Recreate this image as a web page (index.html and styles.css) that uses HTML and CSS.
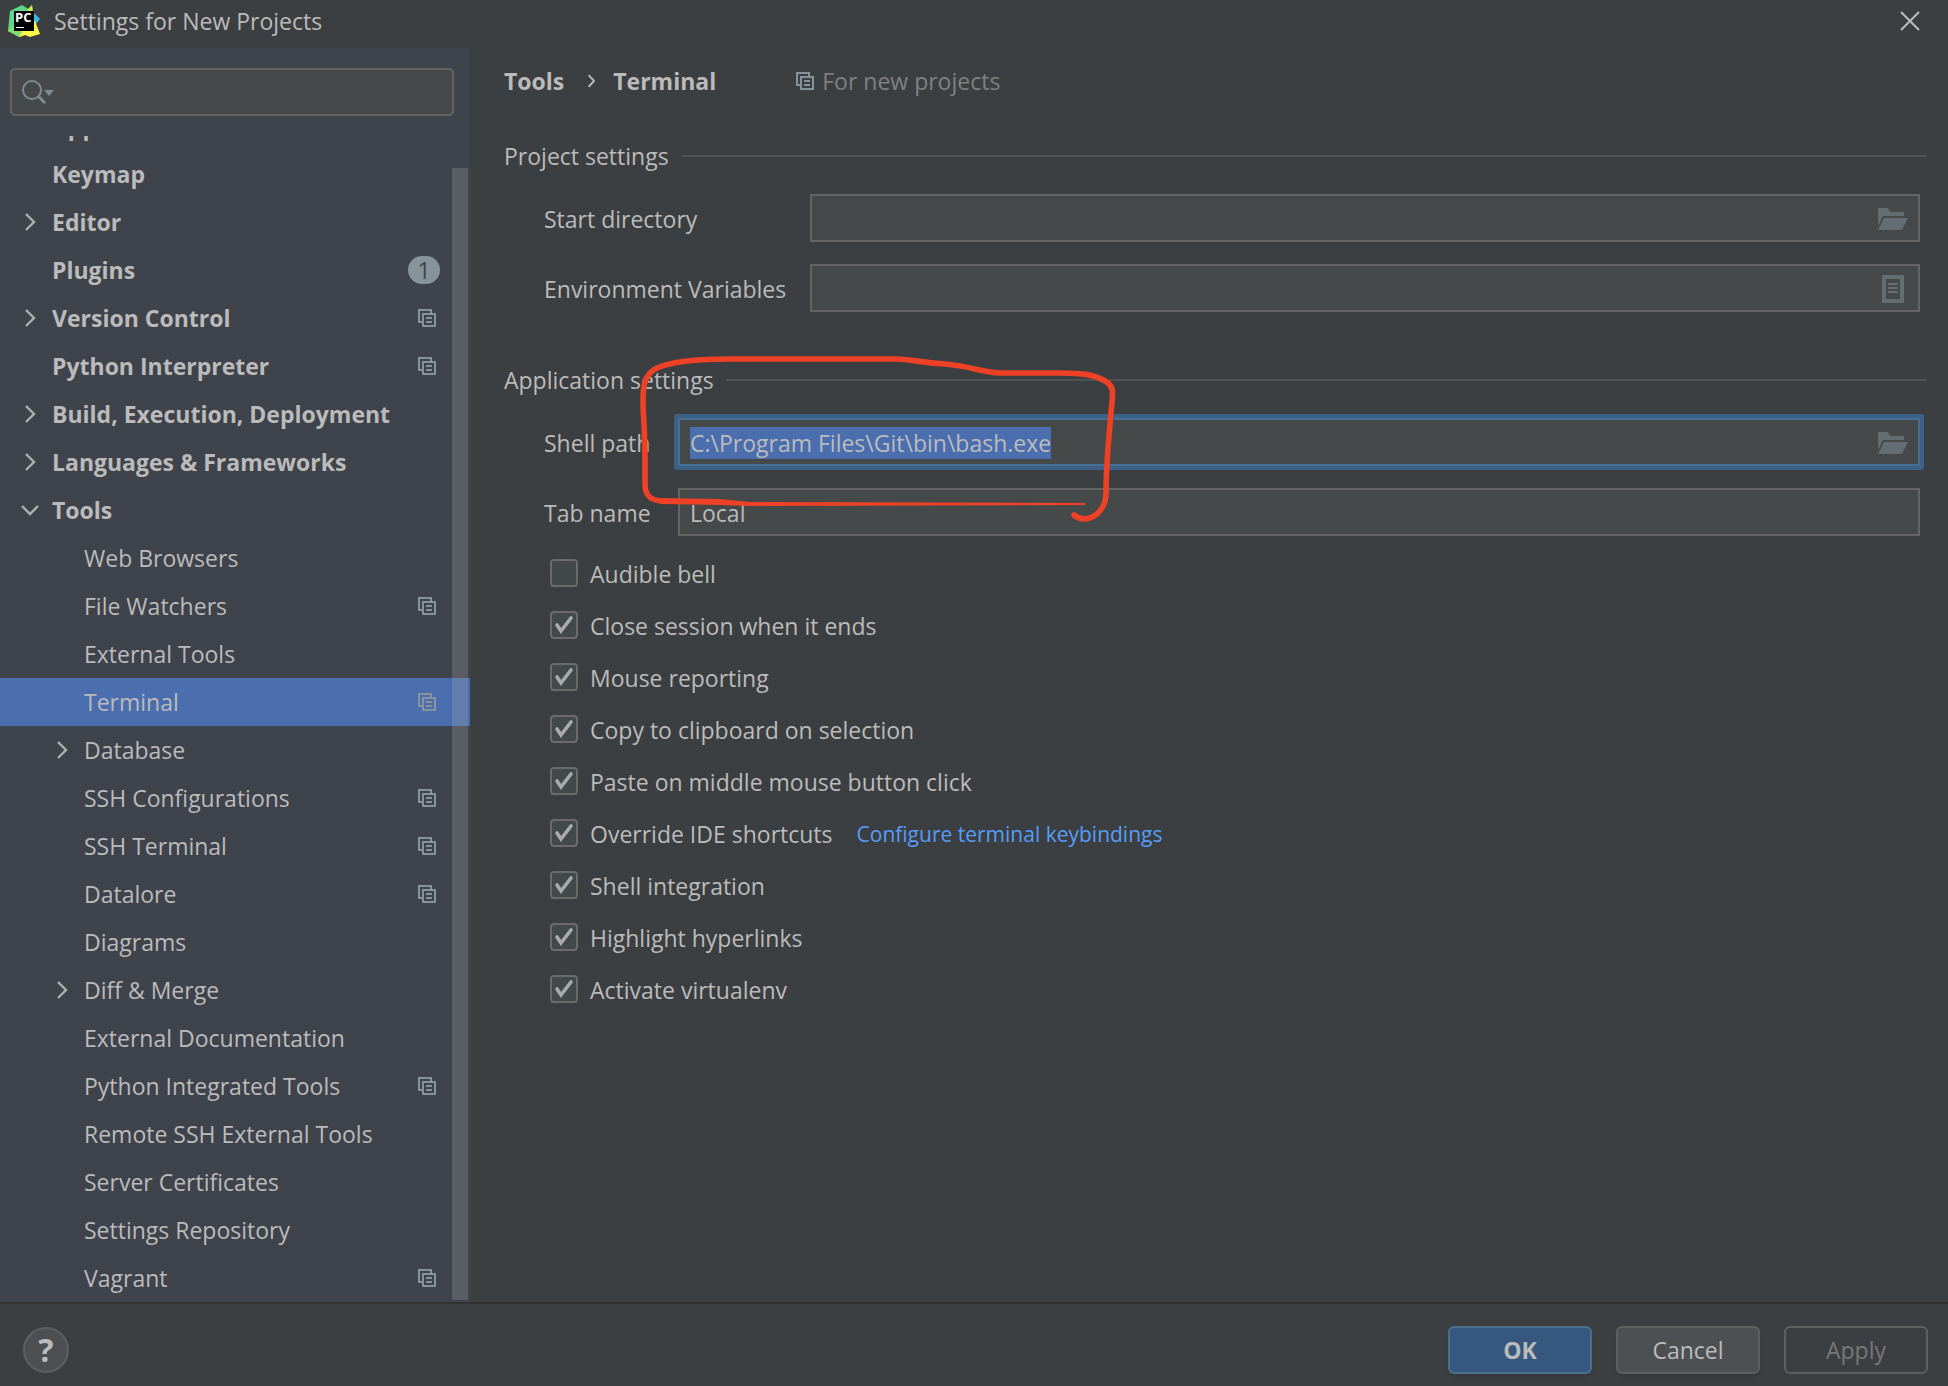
FILE: index.html
```html
<!DOCTYPE html>
<html lang="en">
<head>
    <meta charset="UTF-8">
    <meta name="viewport" content="width=device-width, initial-scale=1.0">
    <title>Settings for New Projects</title>
    <link rel="stylesheet" href="styles.css">
</head>
<body>
    <!-- Shared icons -->
    <svg class="sprite" aria-hidden="true">
        <symbol id="icon-copy" viewBox="0 0 18 18">
            <path d="M5 13H1V1h12v3M5 5h12v12H5zM8 9h6M8 13h6" fill="none" stroke="currentColor" stroke-width="2"/>
        </symbol>
        <symbol id="icon-arrow" viewBox="0 0 12 18">
            <path d="M2 1l8 8-8 8" fill="none" stroke="currentColor" stroke-width="2.4"/>
        </symbol>
        <symbol id="icon-arrow-down" viewBox="0 0 18 12">
            <path d="M1 2l8 8 8-8" fill="none" stroke="currentColor" stroke-width="2.4"/>
        </symbol>
        <symbol id="icon-folder" viewBox="0 0 30 22">
            <path d="M0 0h10l2 4h14v4H5L0 18z M6 10h24l-6 12H0z" fill="currentColor"/>
        </symbol>
        <symbol id="icon-list" viewBox="0 0 22 28">
            <path d="M2 2h18v24H2z" fill="none" stroke="currentColor" stroke-width="4"/>
            <path d="M6 9h10M6 13h10M6 17h10" stroke="currentColor" stroke-width="2"/>
        </symbol>
        <symbol id="icon-check" viewBox="0 0 28 28">
            <path d="M7 14l4 6L21 7" fill="none" stroke="currentColor" stroke-width="3.6" stroke-linecap="round"/>
        </symbol>
    </svg>

    <div class="dialog">
        <header class="titlebar">
            <svg class="logo" viewBox="0 0 32 32" aria-hidden="true">
                <path d="M2 6L14 0l8 5 2-5 1 8-15 20L0 26z" fill="#5fd68b"/>
                <path d="M19 5l5-5 1 8z" fill="#c6f04f"/>
                <path d="M26 8l6 6-4 5-4-2z" fill="#3fb8e8"/>
                <path d="M0 26l7-5 20-5 5 13-10 3-5-2-5 2z" fill="#fcf84a"/>
                <path d="M0 26l6-7 8 8-3 5z" fill="#7fdf6a"/>
                <path d="M6 6h20v20H6z" fill="#000"/>
                <path d="M8 22h8v1H8z" fill="#fff"/>
                <text x="7" y="17" class="logo-text">PC</text>
            </svg>
            <h1>Settings for New Projects</h1>
            <button class="close" type="button" aria-label="Close">
                <svg width="20" height="20" viewBox="0 0 20 20"><path d="M1 1l18 18M19 1L1 19" stroke="currentColor" stroke-width="2"/></svg>
            </button>
        </header>

        <div class="content">
            <aside class="sidebar">
                <label class="search">
                    <svg width="32" height="24" viewBox="0 0 32 24" aria-hidden="true">
                        <circle cx="10" cy="10" r="9" fill="none" stroke="currentColor" stroke-width="2"/>
                        <path d="M16 16l7 7" stroke="currentColor" stroke-width="3"/>
                        <path d="M22 10h10l-5 6z" fill="currentColor"/>
                    </svg>
                    <input type="text" aria-label="Search settings">
                </label>

                <nav class="tree">
                    <a class="row group" href="#">Appearance &amp; Behavior</a>
                    <a class="row group" href="#">Keymap</a>
                    <a class="row group" href="#"><svg class="arrow"><use href="#icon-arrow"/></svg>Editor</a>
                    <a class="row group" href="#">Plugins <span class="badge">1</span></a>
                    <a class="row group" href="#"><svg class="arrow"><use href="#icon-arrow"/></svg>Version Control <svg class="copy"><use href="#icon-copy"/></svg></a>
                    <a class="row group" href="#">Python Interpreter <svg class="copy"><use href="#icon-copy"/></svg></a>
                    <a class="row group" href="#"><svg class="arrow"><use href="#icon-arrow"/></svg>Build, Execution, Deployment</a>
                    <a class="row group" href="#"><svg class="arrow"><use href="#icon-arrow"/></svg>Languages &amp; Frameworks</a>
                    <a class="row group" href="#"><svg class="arrow"><use href="#icon-arrow-down"/></svg>Tools</a>
                    <a class="row" href="#">Web Browsers</a>
                    <a class="row" href="#">File Watchers <svg class="copy"><use href="#icon-copy"/></svg></a>
                    <a class="row" href="#">External Tools</a>
                    <a class="row selected" href="#">Terminal <svg class="copy"><use href="#icon-copy"/></svg></a>
                    <a class="row" href="#"><svg class="arrow"><use href="#icon-arrow"/></svg>Database</a>
                    <a class="row" href="#">SSH Configurations <svg class="copy"><use href="#icon-copy"/></svg></a>
                    <a class="row" href="#">SSH Terminal <svg class="copy"><use href="#icon-copy"/></svg></a>
                    <a class="row" href="#">Datalore <svg class="copy"><use href="#icon-copy"/></svg></a>
                    <a class="row" href="#">Diagrams</a>
                    <a class="row" href="#"><svg class="arrow"><use href="#icon-arrow"/></svg>Diff &amp; Merge</a>
                    <a class="row" href="#">External Documentation</a>
                    <a class="row" href="#">Python Integrated Tools <svg class="copy"><use href="#icon-copy"/></svg></a>
                    <a class="row" href="#">Remote SSH External Tools</a>
                    <a class="row" href="#">Server Certificates</a>
                    <a class="row" href="#">Settings Repository</a>
                    <a class="row" href="#">Vagrant <svg class="copy"><use href="#icon-copy"/></svg></a>
                    <div class="scrollbar"></div>
                </nav>
            </aside>

            <main class="main">
                <div class="breadcrumbs">
                    <strong>Tools</strong>
                    <svg class="crumb-arrow" viewBox="0 0 8 14"><path d="M1 1c1 3 5 5 5 6s-4 3-5 6" fill="none" stroke="currentColor" stroke-width="2"/></svg>
                    <strong>Terminal</strong>
                    <span class="scope"><svg class="copy"><use href="#icon-copy"/></svg>For new projects</span>
                </div>

                <section class="settings project">
                    <h2>Project settings</h2>
                    <div class="fields">
                        <label for="start-dir">Start directory</label>
                        <div class="field">
                            <input type="text" id="start-dir">
                            <button type="button" aria-label="Browse"><svg width="30" height="22"><use href="#icon-folder"/></svg></button>
                        </div>
                        <label for="env-vars">Environment Variables</label>
                        <div class="field">
                            <input type="text" id="env-vars">
                            <button type="button" aria-label="Edit variables"><svg width="22" height="28"><use href="#icon-list"/></svg></button>
                        </div>
                    </div>
                </section>

                <section class="settings application">
                    <h2>Application settings</h2>
                    <div class="fields">
                        <label for="shell-path">Shell path</label>
                        <div class="field active">
                            <input type="text" id="shell-path" value="C:\Program Files\Git\bin\bash.exe" spellcheck="false">
                            <button type="button" aria-label="Browse"><svg width="30" height="22"><use href="#icon-folder"/></svg></button>
                        </div>
                        <label for="tab-name">Tab name</label>
                        <div class="field">
                            <input type="text" id="tab-name" value="Local">
                        </div>
                    </div>

                    <div class="options">
                        <div class="option"><label><span class="check"><input type="checkbox"><svg><use href="#icon-check"/></svg></span>Audible bell</label></div>
                        <div class="option"><label><span class="check"><input type="checkbox" checked><svg><use href="#icon-check"/></svg></span>Close session when it ends</label></div>
                        <div class="option"><label><span class="check"><input type="checkbox" checked><svg><use href="#icon-check"/></svg></span>Mouse reporting</label></div>
                        <div class="option"><label><span class="check"><input type="checkbox" checked><svg><use href="#icon-check"/></svg></span>Copy to clipboard on selection</label></div>
                        <div class="option"><label><span class="check"><input type="checkbox" checked><svg><use href="#icon-check"/></svg></span>Paste on middle mouse button click</label></div>
                        <div class="option"><label><span class="check"><input type="checkbox" checked><svg><use href="#icon-check"/></svg></span>Override IDE shortcuts</label><a href="#">Configure terminal keybindings</a></div>
                        <div class="option"><label><span class="check"><input type="checkbox" checked><svg><use href="#icon-check"/></svg></span>Shell integration</label></div>
                        <div class="option"><label><span class="check"><input type="checkbox" checked><svg><use href="#icon-check"/></svg></span>Highlight hyperlinks</label></div>
                        <div class="option"><label><span class="check"><input type="checkbox" checked><svg><use href="#icon-check"/></svg></span>Activate virtualenv</label></div>
                    </div>
                </section>

                <!-- Hand-drawn mark round the shell path -->
                <svg class="marker" viewBox="640 350 480 180" aria-hidden="true">
                    <path d="M1074 515C1080 520 1088 520 1094 516C1102 511 1106 502 1106 493C1106 460 1109 440 1111 412C1113 392 1114 388 1108 383C1096 374 1080 373 1060 373L1000 373C980 372 970 366 945 364C915 362 910 359 896 359L730 359C695 359 670 362 657 368C645 374 643 384 643 400C643 415 645 430 645 460L645 484C645 496 651 501 664 501" fill="none" stroke="#ee4125" stroke-width="5.6" stroke-linecap="round" stroke-linejoin="round"/>
                    <path d="M660 498L720 499L750 502L1085 503V505L750 506L720 505L660 504z" fill="#ee4125"/>
                </svg>
            </main>
        </div>

        <footer class="footer">
            <button class="help" type="button" aria-label="Help">?</button>
            <button class="btn primary" type="button">OK</button>
            <button class="btn" type="button">Cancel</button>
            <button class="btn" type="button" disabled>Apply</button>
        </footer>
    </div>

    <script>
        // Start with the shell path selected
        const shellPath = document.getElementById('shell-path');
        shellPath.focus();
        shellPath.select();
    </script>
</body>
</html>
```
FILE: styles.css
```css
* {
    box-sizing: border-box;
}
body {
    margin: 0;
    background-color: #3c3f41;
    color: #bbbbbb;
    font-family: "Open Sans", "Noto Sans", sans-serif;
    font-size: 23px;
    line-height: 32px;
}
button, input {
    font: inherit;
    color: inherit;
}
button {
    padding: 0;
    border: none;
    background: none;
    cursor: pointer;
}
svg {
    display: block;
    flex: none;
}
.sprite {
    position: absolute;
    width: 0;
    height: 0;
}
.dialog {
    display: flex;
    flex-direction: column;
    min-height: 100vh;
}

/* Title bar */
.titlebar {
    display: flex;
    align-items: center;
    height: 48px;
    padding: 0 28px 6px 8px;
}
.titlebar h1 {
    margin: 0 auto 0 14px;
    font-size: 23px;
    font-weight: normal;
}
.logo {
    width: 32px;
    height: 32px;
}
.logo-text {
    font-size: 13px;
    font-weight: bold;
    fill: #fff;
}

.content {
    display: flex;
    flex: 1;
}

/* Sidebar */
.sidebar {
    flex: none;
    width: 470px;
    padding-top: 20px;
    background-color: #3f434c;
}
.search {
    display: flex;
    align-items: center;
    height: 48px;
    margin: 0 16px 20px 10px;
    padding: 0 10px;
    border: 2px solid #646464;
    border-radius: 5px;
    background-color: #45494a;
    color: #7f8b91;
}
.search input {
    flex: 1;
    min-width: 0;
    border: none;
    outline: none;
    background: none;
    color: #bbbbbb;
}
.tree {
    position: relative;
    overflow: hidden;
}
.row {
    position: relative;
    display: flex;
    align-items: center;
    height: 48px;
    padding: 0 34px 0 84px;
    color: inherit;
    text-decoration: none;
}
/* list is scrolled down a little */
.row:first-child {
    margin-top: -34px;
}
.group {
    padding-left: 52px;
    font-weight: bold;
}
.selected {
    background-color: #4b6eaf;
}
.arrow {
    width: 18px;
    height: 18px;
    margin: 0 13px 0 -31px;
    color: #afb1b3;
}
.copy {
    width: 18px;
    height: 18px;
    color: #87939a;
}
.row .copy, .badge {
    margin-left: auto;
}
.badge {
    width: 32px;
    height: 28px;
    margin-right: -4px;
    border-radius: 14px;
    background-color: #87939a;
    color: #3f434c;
    font-weight: normal;
    line-height: 29px;
    text-align: center;
}
.scrollbar {
    position: absolute;
    top: 32px;
    right: 2px;
    bottom: 2px;
    width: 16px;
    background-color: rgba(166, 166, 166, 0.27);
}

/* Settings page */
.main {
    position: relative;
    flex: 1;
    min-width: 0;
    padding: 17px 22px 0 34px;
}
.breadcrumbs {
    display: flex;
    align-items: center;
    margin-bottom: 43px;
}
.crumb-arrow {
    width: 8px;
    height: 14px;
    margin: 0 17px 0 24px;
}
.scope {
    display: flex;
    align-items: center;
    gap: 8px;
    margin-left: 80px;
    color: #808080;
}
.settings h2 {
    display: flex;
    align-items: center;
    gap: 12px;
    margin: 0 0 22px;
    font-size: 23px;
    font-weight: normal;
}
.settings h2::after {
    content: "";
    flex: 1;
    height: 2px;
    background-color: #515151;
}
.project {
    margin-bottom: 52px;
}
.fields {
    display: grid;
    grid-template-columns: 266px 1fr;
    row-gap: 22px;
    align-items: center;
    padding: 0 6px 0 40px;
}
.application .fields {
    grid-template-columns: 134px 1fr;
}
.fields label {
    padding-top: 2px;
}
.field {
    display: flex;
    align-items: center;
    height: 48px;
    padding: 2px 10px 0;
    border: 2px solid #646464;
    background-color: #45494a;
}
.field.active {
    border-color: #466d94;
    box-shadow: 0 0 0 4px #3d6185;
    border-radius: 1px;
}
.field input {
    flex: 1;
    min-width: 0;
    height: 32px;
    padding: 0;
    border: none;
    outline: none;
    background: none;
}
.field input::selection {
    background-color: #4b6eaf;
    color: #bbbbbb;
}
.field button {
    display: flex;
    justify-content: center;
    width: 30px;
    color: #646d71;
}
.options {
    padding: 12px 0 0 46px;
}
.option {
    display: flex;
    align-items: center;
    gap: 24px;
    height: 52px;
}
.option label {
    display: flex;
    align-items: center;
    gap: 12px;
}
.option a {
    color: #589df6;
    font-size: 21px;
    text-decoration: none;
}
.check {
    display: grid;
    margin-bottom: 2px;
}
.check input, .check svg {
    grid-area: 1 / 1;
    width: 28px;
    height: 28px;
    margin: 0;
}
.check input {
    appearance: none;
    border: 2px solid #6b6b6b;
    border-radius: 4px;
    background-color: #43494a;
}
.check svg {
    visibility: hidden;
    color: #a9aaab;
    pointer-events: none;
}
.check input:checked + svg {
    visibility: visible;
}
.marker {
    position: absolute;
    top: 302px;
    left: 170px;
    width: 480px;
    height: 180px;
    pointer-events: none;
}

/* Footer */
.footer {
    display: flex;
    align-items: center;
    gap: 24px;
    height: 84px;
    padding: 20px 20px 10px 23px;
    border-top: 2px solid #323232;
}
.help {
    width: 46px;
    height: 46px;
    margin-right: auto;
    border: 2px solid #5e6060;
    border-radius: 50%;
    background-color: #4c5052;
    font-size: 32px;
    font-weight: bold;
}
.btn {
    width: 144px;
    height: 48px;
    border: 2px solid #5e6060;
    border-radius: 6px;
    background-color: #4c5052;
    box-shadow: 0 3px 2px rgba(0, 0, 0, 0.1);
}
.btn.primary {
    border-color: #4c708c;
    background-color: #365880;
    font-weight: bold;
}
.btn:disabled {
    background-color: transparent;
    box-shadow: none;
    color: #777777;
}
```
